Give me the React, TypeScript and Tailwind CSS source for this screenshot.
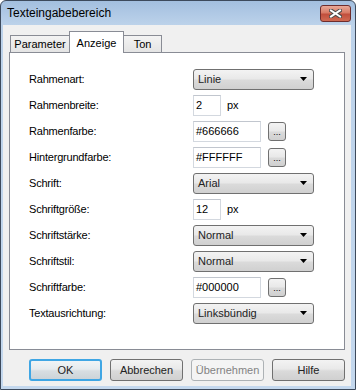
import React from "react";

const font = { fontFamily: '"Liberation Sans", Arial, sans-serif' };

function Select({ value }: { value: string }) {
  return (
    <div className="w-[121px] h-[21px] rounded-[3px] border border-[#707070] bg-[linear-gradient(#f3f3f3,#e9e9e9_45%,#dadada_55%,#d0d0d0)] flex items-center justify-between pl-[4px] pr-[5px] text-[11px] text-[#222]">
      <span>{value}</span>
      <svg width="8" height="4" viewBox="0 0 8 4">
        <path d="M0 0 H7 L3.5 4 Z" fill="#000" />
      </svg>
    </div>
  );
}

function TextBox({ value, w }: { value: string; w: number }) {
  return (
    <div
      className={
        "h-[21px] bg-white border border-[#d3d8df] border-t-[#c1c6ce] flex items-center pl-[2px] text-[11px] text-black " +
        (w === 28 ? "w-[28px]" : "w-[68px]")
      }
    >
      {value}
    </div>
  );
}

function DotsButton() {
  return (
    <div className="w-[18px] h-[19px] rounded-[3px] border border-[#707070] bg-[linear-gradient(#f3f3f3,#e9e9e9_45%,#dadada_55%,#d0d0d0)] flex items-end justify-center pb-[3px] text-[9px] leading-none text-black">
      ...
    </div>
  );
}

function ColorRow({ value }: { value: string }) {
  return (
    <div className="flex items-center gap-[7px]">
      <TextBox value={value} w={68} />
      <DotsButton />
    </div>
  );
}

function PxRow({ value }: { value: string }) {
  return (
    <div className="flex items-center gap-[6px]">
      <TextBox value={value} w={28} />
      <span className="text-[11px] text-black">px</span>
    </div>
  );
}

function Btn({
  label,
  kind,
}: {
  label: string;
  kind?: "default" | "disabled";
}) {
  if (kind === "disabled") {
    return (
      <div className="w-[73px] h-[22px] rounded-[3px] border border-[#adb2b5] bg-[#f4f4f4] flex items-center justify-center text-[11px] text-[#838383]">
        {label}
      </div>
    );
  }
  if (kind === "default") {
    return (
      <div className="w-[73px] h-[22px] rounded-[3px] border-2 border-[#3fa6e4] bg-[linear-gradient(#f0f4f6,#e6ebee_45%,#d8dee2_55%,#ccd3d8)] flex items-center justify-center text-[11px] text-[#222]">
        {label}
      </div>
    );
  }
  return (
    <div className="w-[73px] h-[22px] rounded-[3px] border border-[#707070] bg-[linear-gradient(#f3f3f3,#e9e9e9_45%,#dadada_55%,#d0d0d0)] flex items-center justify-center text-[11px] text-[#222]">
      {label}
    </div>
  );
}

export default function App() {
  const rows: [string, React.ReactNode][] = [
    ["Rahmenart:", <Select value="Linie" />],
    ["Rahmenbreite:", <PxRow value="2" />],
    ["Rahmenfarbe:", <ColorRow value="#666666" />],
    ["Hintergrundfarbe:", <ColorRow value="#FFFFFF" />],
    ["Schrift:", <Select value="Arial" />],
    ["Schriftgröße:", <PxRow value="12" />],
    ["Schriftstärke:", <Select value="Normal" />],
    ["Schriftstil:", <Select value="Normal" />],
    ["Schriftfarbe:", <ColorRow value="#000000" />],
    ["Textausrichtung:", <Select value="Linksbündig" />],
  ];

  return (
    <div className="w-[356px] h-[390px] bg-white" style={font}>
      <div className="w-[356px] h-[390px] flex flex-col rounded-t-[6px] border border-[#3d4a5c] bg-[linear-gradient(#a3bfdf_0px,#bcd2ea_24px,#c4d8ee_100%)]">
        {/* Title bar */}
        <div className="h-[24px] flex items-start justify-between pl-[6px] pr-[4px]">
          <span className="pt-[5px] text-[12px] leading-[14px] text-black">Texteingabebereich</span>
          <div className="mt-[4px] w-[31px] h-[17px] rounded-[3px] border border-[#6e2d2d] bg-[linear-gradient(#e9a998_0%,#d87b66_45%,#c14f3d_55%,#d06a52_100%)] flex items-center justify-center">
            <svg width="13" height="9" viewBox="0 0 13 9">
              <path d="M2 1.5 L11 7.5 M11 1.5 L2 7.5" stroke="#4a4a4a" strokeWidth="4" strokeLinecap="square" />
              <path d="M2 1.5 L11 7.5 M11 1.5 L2 7.5" stroke="#ffffff" strokeWidth="2" strokeLinecap="square" />
            </svg>
          </div>
        </div>

        {/* Client area */}
        <div className="flex-1 ml-[2px] mr-[4px] mb-[3px] bg-[#f0f0f0] flex flex-col pt-[7px] px-[6px]">
          {/* Tabs */}
          <div className="flex items-end h-[20px] pl-[1px] text-[11px] text-black">
            <div className="w-[60px] h-[17px] border border-b-0 border-[#898c95] bg-[linear-gradient(#f3f3f3,#e4e4e4)] flex items-center justify-center">
              Parameter
            </div>
            <div className="relative z-10 -ml-[1px] -mb-[1px] w-[55px] h-[22px] border border-b-0 border-[#898c95] bg-white flex items-start justify-center pt-[3px]">
              Anzeige
            </div>
            <div className="-ml-[1px] w-[39px] h-[17px] border border-b-0 border-[#898c95] bg-[linear-gradient(#f3f3f3,#e4e4e4)] flex items-center justify-center">
              Ton
            </div>
          </div>

          {/* Panel */}
          <div className="h-[298px] border border-[#898c95] bg-white pt-[13px] pl-[19px]">
            <div className="grid grid-cols-[164px_1fr] auto-rows-[26px] items-center text-[11px] text-black">
              {rows.map(([label, ctrl], i) => (
                <React.Fragment key={i}>
                  <span className="tracking-[-0.2px]">{label}</span>
                  <div>{ctrl}</div>
                </React.Fragment>
              ))}
            </div>
          </div>

          {/* Buttons */}
          <div className="flex justify-end gap-[8px] mt-[9px]">
            <Btn label="OK" kind="default" />
            <Btn label="Abbrechen" />
            <Btn label="Übernehmen" kind="disabled" />
            <Btn label="Hilfe" />
          </div>
        </div>
      </div>
    </div>
  );
}
